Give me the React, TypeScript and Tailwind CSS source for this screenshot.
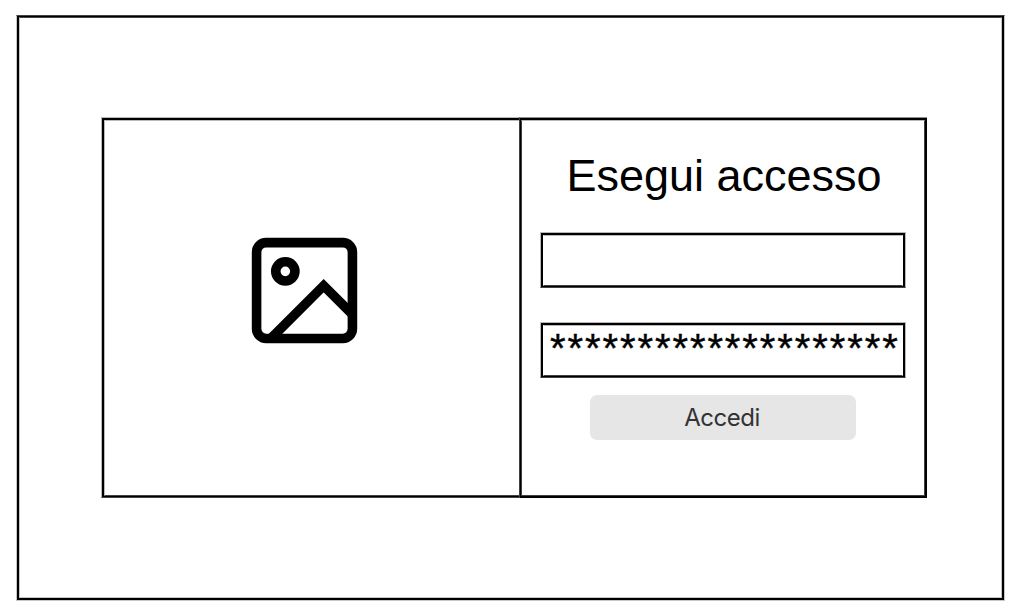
import React from "react";

function ImageIcon() {
  return (
    <svg className="h-[115px] w-[115px]" viewBox="0 0 24 24" fill="none" stroke="#000" strokeWidth="2">
      <rect x="2" y="2" width="20" height="20" rx="2" />
      <circle cx="8" cy="8" r="2" />
      <path d="M5 22L16 11L22 17" />
    </svg>
  );
}

function Field({ value, className }: { value: string; className: string }) {
  return (
    <div className={`h-14 w-[366px] border border-[#b8b8b8] border-b-[#404040] ${className}`}>
      <div className="h-full border-2 border-b border-black">
        <div className="h-full overflow-hidden whitespace-nowrap border border-transparent border-t-[#b8b8b8] border-b-[#404040] pl-[6px] text-[40px] leading-[44px] tracking-[1.92px] [-webkit-text-stroke:0.4px_black]">
          {value}
        </div>
      </div>
    </div>
  );
}

export default function App() {
  return (
    <main className="h-[615px] w-[1022px] bg-white pl-4 pt-[15px] font-['Liberation_Sans',Arial,sans-serif] text-black">
      <div className="h-[586px] w-[989px] border border-[#c4c8c4] border-t-[#404440]">
        <div className="h-full border-2 border-t border-black">
          <div className="h-full border border-[#c4c8c4] border-t-[#404440] pl-[81px] pt-[99px]">
            <div className="flex h-[381px] w-[826px]">
              <section className="h-full w-[418px] border border-r-0 border-[#b8bcb8] border-b-[#404440]">
                <div className="h-full border-2 border-b border-r-0 border-black">
                  <div className="flex h-full items-start border border-r-0 border-[#b8bcb8] border-b-[#404440] pt-[112px] pl-[142px]">
                    <ImageIcon />
                  </div>
                </div>
              </section>
              <section className="h-full w-[408px] border border-b-0 border-r-0 border-[#404040] border-t-[#909090]">
                <div className="h-full border-2 border-l border-black">
                  <div className="flex h-full flex-col items-center border border-[#404040] border-t-[#b8b8b8]">
                    <h1 className="mt-[29px] h-[52px] whitespace-nowrap pl-[2px] text-[45px] leading-[52px]">Esegui accesso</h1>
                    <Field value="" className="mt-[30px]" />
                    <Field value="********************" className="mt-[34px]" />
                    <button className="mt-[17px] h-[45px] w-[266px] rounded-[7px] bg-[#e6e6e6] pr-[2px] font-['Inter',sans-serif] text-2xl tracking-[-0.5px] text-[#333]">
                      Accedi
                    </button>
                  </div>
                </div>
              </section>
            </div>
          </div>
        </div>
      </div>
    </main>
  );
}
